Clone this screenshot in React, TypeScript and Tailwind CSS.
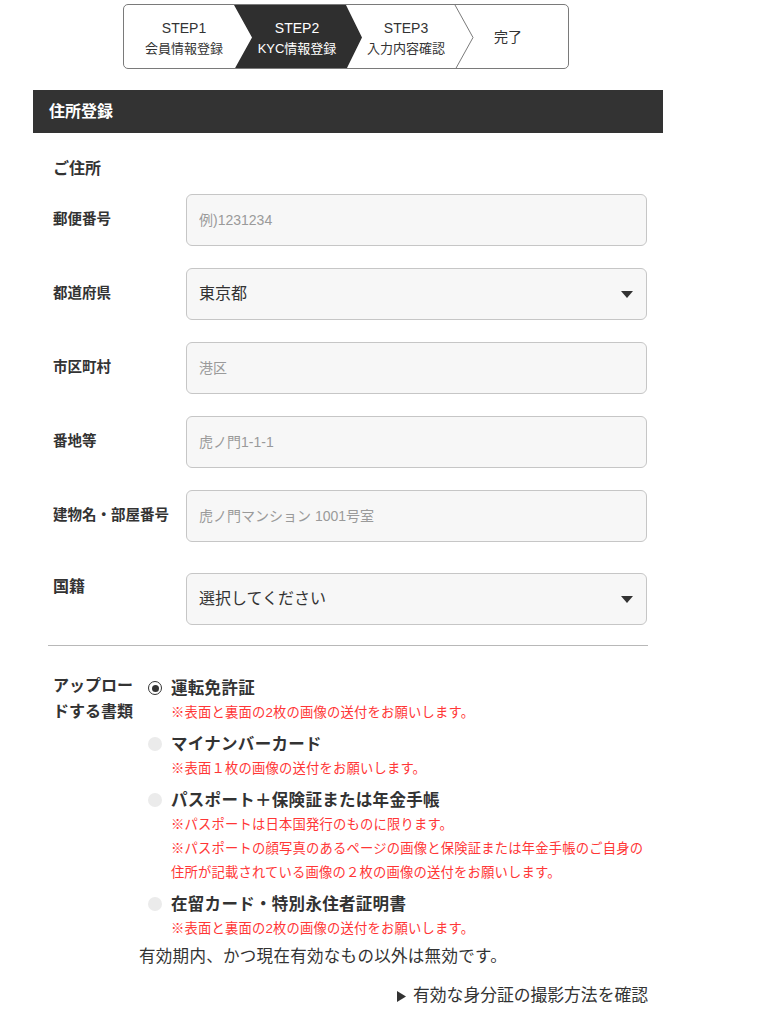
import React from 'react';

const FONT = "font-['Liberation_Sans','Noto_Sans_CJK_JP',sans-serif]";

const Stepper: React.FC = () => {
  return (
    <div className="relative ml-[90px] mt-[4px] h-[65px] w-[446px] overflow-hidden rounded-[5px] border border-[#7a7a7a] bg-white">
      <svg className="absolute inset-0" width="446" height="65" viewBox="0 0 446 65">
        <polygon points="110,0 222,0 238,32.5 222,65 110,65 128,32.5" fill="#2f2f2f" />
        <polyline points="331,0 349,32.5 331,65" fill="none" stroke="#7a7a7a" strokeWidth="1" />
      </svg>
      <div className="relative flex h-full items-center pt-[2px]">
        <div className="flex w-[120px] flex-col items-center gap-[4px] text-[#333]">
          <span className="text-[14px] leading-[18px]">STEP1</span>
          <span className="text-[13px] leading-[16px]">会員情報登録</span>
        </div>
        <div className="flex w-[106px] flex-col items-center gap-[4px] text-white">
          <span className="text-[14px] leading-[18px]">STEP2</span>
          <span className="text-[13px] leading-[16px]">KYC情報登録</span>
        </div>
        <div className="flex w-[112px] flex-col items-center gap-[4px] text-[#333]">
          <span className="text-[14px] leading-[18px]">STEP3</span>
          <span className="text-[13px] leading-[16px]">入力内容確認</span>
        </div>
        <div className="flex w-[92px] justify-center text-[14px] text-[#333]">完了</div>
      </div>
    </div>
  );
};

const Caret: React.FC = () => (
  <svg width="12" height="7" viewBox="0 0 12 7">
    <polygon points="0,0 12,0 6,7" fill="#333" />
  </svg>
);

const TextRow: React.FC<{ label: string; placeholder: string }> = ({ label, placeholder }) => (
  <div className="flex items-center">
    <div className="w-[133px] text-[14.5px] font-bold text-[#333]">{label}</div>
    <input
      className="h-[52px] flex-1 rounded-[6px] border border-[#c6c6c6] bg-[#f7f7f7] px-[12px] text-[14px] text-[#333] placeholder:text-[#9a9a9a] outline-none"
      placeholder={placeholder}
    />
  </div>
);

const SelectBox: React.FC<{ value: string }> = ({ value }) => (
  <div className="flex h-[52px] flex-1 items-center justify-between rounded-[6px] border border-[#c6c6c6] bg-[#f7f7f7] pl-[12px] pr-[13px] text-[16px] text-[#333]">
    <span>{value}</span>
    <Caret />
  </div>
);

const Radio: React.FC<{ checked?: boolean }> = ({ checked }) =>
  checked ? (
    <span className="flex h-[14px] w-[14px] items-center justify-center rounded-full border-[1.5px] border-[#333] bg-white">
      <span className="h-[7px] w-[7px] rounded-full bg-[#333]" />
    </span>
  ) : (
    <span className="h-[14px] w-[14px] rounded-full bg-[#ebebeb]" />
  );

const Option: React.FC<{ title: string; notes: string[]; checked?: boolean }> = ({ title, notes, checked }) => (
  <div>
    <div className="flex items-center gap-[9px] pl-[9px]">
      <Radio checked={checked} />
      <span className="text-[16.5px] font-bold leading-[26px] tracking-[0.3px] text-[#333]">{title}</span>
    </div>
    {notes.map((n) => (
      <div key={n} className="pl-[32px] text-[13.3px] leading-[24px] tracking-[0.2px] text-[#ff3636]">
        {n}
      </div>
    ))}
  </div>
);

export default function App() {
  return (
    <div className={`${FONT} min-h-screen bg-white`}>
      <div className="ml-[33px] w-[630px] pb-[20px]">
        <Stepper />

        <div className="mt-[21px] flex h-[43px] items-center bg-[#333] pl-[16px] text-[16px] font-bold text-white">
          住所登録
        </div>

        <div className="pl-[20px] pr-[16px]">
          <div className="mt-[24px] text-[16px] font-bold leading-[24px] text-[#333]">ご住所</div>

          <div className="mt-[13px] flex flex-col gap-[22px]">
            <TextRow label="郵便番号" placeholder="例)1231234" />
            <div className="flex items-center">
              <div className="w-[133px] text-[14.5px] font-bold text-[#333]">都道府県</div>
              <SelectBox value="東京都" />
            </div>
            <TextRow label="市区町村" placeholder="港区" />
            <TextRow label="番地等" placeholder="虎ノ門1-1-1" />
            <TextRow label="建物名・部屋番号" placeholder="虎ノ門マンション 1001号室" />
          </div>

          <div className="mt-[31px] flex items-start">
            <div className="w-[133px] pt-[2px] text-[16px] font-bold leading-[24px] text-[#333]">国籍</div>
            <SelectBox value="選択してください" />
          </div>
        </div>

        <div className="mx-[15px] mt-[20px] h-px bg-[#b8b8b8]" />

        <div className="pl-[20px] pr-[15px]">
          <div className="mt-[27px] flex items-start">
            <div className="w-[86px] text-[16px] font-bold leading-[26px] text-[#333]">
              アップロー
              <br />
              ドする書類
            </div>
            <div className="flex flex-col gap-[6px] pt-[2px]">
              <Option checked title="運転免許証" notes={['※表面と裏面の2枚の画像の送付をお願いします。']} />
              <Option title="マイナンバーカード" notes={['※表面１枚の画像の送付をお願いします。']} />
              <Option
                title="パスポート＋保険証または年金手帳"
                notes={[
                  '※パスポートは日本国発行のものに限ります。',
                  '※パスポートの顔写真のあるページの画像と保険証または年金手帳のご自身の',
                  '住所が記載されている画像の２枚の画像の送付をお願いします。',
                ]}
              />
              <Option title="在留カード・特別永住者証明書" notes={['※表面と裏面の2枚の画像の送付をお願いします。']} />
            </div>
          </div>

          <div className="mt-[3px] pl-[86px] text-[16.5px] leading-[24px] tracking-[0.3px] text-[#333]">
            有効期内、かつ現在有効なもの以外は無効です。
          </div>

          <div className="mt-[16px] flex items-center justify-end gap-[7px] text-[16.8px] leading-[24px] text-[#333]">
            <svg width="9" height="11" viewBox="0 0 9 11">
              <polygon points="0,0 9,5.5 0,11" fill="#333" />
            </svg>
            <span>有効な身分証の撮影方法を確認</span>
          </div>
        </div>
      </div>
    </div>
  );
}
